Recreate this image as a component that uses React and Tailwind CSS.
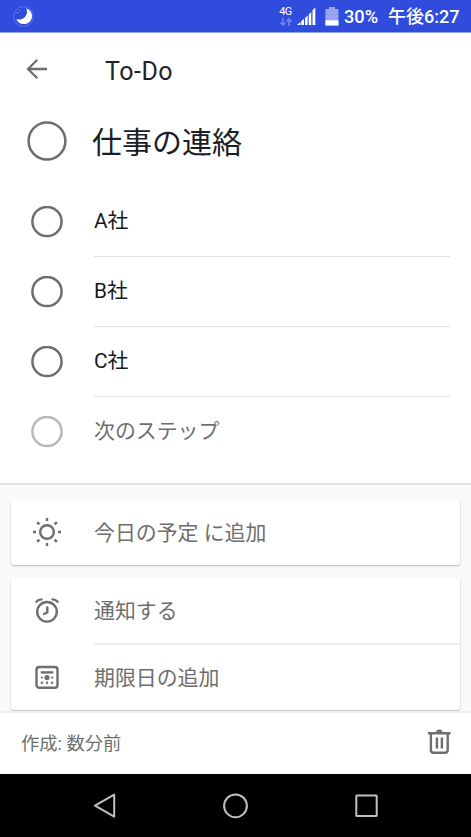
import React from 'react';

const steps = ['A社', 'B社', 'C社'];

function Moon() {
  return (
    <svg className="ml-[13px] h-[21px] w-[21px]" viewBox="0 0 21 21">
      <circle cx="10.5" cy="10.5" r="9.9" fill="none" stroke="#6373e5" strokeWidth="1" />
      <path d="M13.2 2.4C17.1 3.4 19.3 6.8 19 10.5C18.6 15.3 14.9 18.3 10.5 18.1C7.2 17.9 4.4 16.1 3.2 13C6.2 14.2 9.4 13.4 11.7 11.2C14.2 8.8 14.8 5.2 13.2 2.4Z" fill="#fff" />
      <circle cx="4.8" cy="6.6" r=".7" fill="#b6c0f7" />
      <circle cx="7" cy="4.2" r=".5" fill="#a4b0f5" />
    </svg>
  );
}

function StatusBar() {
  return (
    <div className="flex h-[32px] shrink-0 items-center bg-[#304cdd] text-white">
      <Moon />
      <div className="ml-auto flex h-full items-center">
        <div className="flex h-full w-[15px] flex-col items-center pt-[6px]">
          <span className="font-['Roboto','Noto_Sans_CJK_JP',sans-serif] text-[11px] leading-[11px] tracking-[-0.5px]">4G</span>
          <svg className="mt-[1px] h-[8px] w-[12px]" viewBox="0 0 12 8" fill="none" stroke="#7383e9" strokeWidth="1.7">
            <path d="M3 0V7M.6 4.6L3 7L5.4 4.6M9 8V1M6.6 3.4L9 1L11.4 3.4" />
          </svg>
        </div>
        <svg className="ml-[4px] h-[19px] w-[20px]" viewBox="0 0 20 19" fill="#fff">
          <path d="M0 18L3.4 15V18ZM4.2 14.3L7 11.8V18H4.2ZM8 11L10.6 8.5V18H8ZM11.7 7.4L14.3 4.9V18H11.7ZM15.5 3.2L18.3 .5V18H15.5Z" />
        </svg>
        <svg className="ml-[8px] h-[20px] w-[14px]" viewBox="0 0 14 20">
          <path d="M4 1H10V3H13.4V19.5H.4V3H4Z" fill="#98a4ef" />
          <path d="M.4 14.3H13.4V19.5H.4Z" fill="#fff" />
        </svg>
        <span className="ml-[5px] mt-[2px] w-[44px] whitespace-nowrap font-['Roboto',sans-serif] text-[18.2px] font-medium leading-[32px]">30%</span>
        <span className="mt-[1px] w-[83px] whitespace-nowrap font-['Roboto','Noto_Sans_CJK_JP',sans-serif] text-[18px] font-medium leading-[32px]">午後6:27</span>
      </div>
    </div>
  );
}

function Ring({ className }) {
  return (
    <svg className={`h-[32px] w-[32px] shrink-0 ${className}`} viewBox="0 0 32 32" fill="none" stroke="currentColor" strokeWidth="2.5">
      <circle cx="16" cy="15.5" r="14.6" />
    </svg>
  );
}

function Sun() {
  return (
    <svg className="h-[30px] w-[30px]" viewBox="0 0 30 30" fill="none" stroke="#6e6e6e" strokeWidth="2.4">
      <circle cx="15" cy="15" r="6.8" />
      <path d="M15 1V4M15 26V29M1 15H4M26 15H29M5.1 5.1L7.4 7.4M22.6 22.6L24.9 24.9M5.1 24.9L7.4 22.6M22.6 7.4L24.9 5.1" />
    </svg>
  );
}

function Alarm() {
  return (
    <svg className="h-[30px] w-[30px]" viewBox="0 0 30 30" fill="none" stroke="#6e6e6e" strokeWidth="2.4" strokeLinecap="round">
      <circle cx="15" cy="16.8" r="9.8" />
      <path d="M15.3 12.4V17.3L12.2 19M4.4 6.8Q6.4 4.5 9.5 4.4M20.5 4.4Q23.6 4.5 25.6 6.8" />
    </svg>
  );
}

function CalendarIcon() {
  return (
    <svg className="h-[30px] w-[30px]" viewBox="0 0 30 30" fill="#6e6e6e">
      <rect x="4.5" y="5" width="21" height="20.8" rx="2.8" fill="none" stroke="#6e6e6e" strokeWidth="2.4" />
      <rect x="8.7" y="9.2" width="12.6" height="2.4" />
      <circle cx="15" cy="15.6" r="2.6" />
      <circle cx="9.9" cy="15.6" r="1.1" />
      <circle cx="20.1" cy="15.6" r="1.1" />
      <circle cx="9.9" cy="20.8" r="1.2" />
      <circle cx="15" cy="20.8" r="1.2" />
      <circle cx="20.1" cy="20.8" r="1.2" />
    </svg>
  );
}

function ActionRow({ icon, label }) {
  return (
    <div className="flex h-[65px] items-center pl-[21px]">
      <span className="mb-[2px]">{icon}</span>
      <span className="ml-[32px] mt-[1px] whitespace-nowrap text-[20.9px] leading-[30px] text-[#6e6e6e]">{label}</span>
    </div>
  );
}

function NavBar() {
  return (
    <div className="flex h-[63px] shrink-0 items-center bg-black pl-[90px]">
      <svg className="h-[30px] w-[291px]" viewBox="0 0 291 30" fill="none" stroke="#c0c0c0" strokeWidth="2" strokeLinejoin="round">
        <path d="M5 14.7L24.2 3.7V25.7Z" />
        <circle cx="145.5" cy="14.8" r="11.4" />
        <rect x="266.3" y="4.6" width="20.4" height="20.4" rx=".5" />
      </svg>
    </div>
  );
}

export default function App() {
  return (
    <div className="flex h-[837px] w-[471px] flex-col overflow-hidden bg-[#fafafa] font-['Roboto','Noto_Sans_CJK_JP',sans-serif]">
      <StatusBar />
      <main className="h-[453px] shrink-0 border-t border-[#98a4ee] border-b-2 border-b-[#e2e2e2] bg-white">
        <header className="flex h-[73px] items-center pl-[26px]">
          <svg className="mb-[2px] h-[22px] w-[22px]" viewBox="0 0 22 22" fill="none" stroke="#6e6e6e" strokeWidth="2.3">
            <path d="M21 11H2M11.3 1.8L2 11L11.3 20.2" />
          </svg>
          <h1 className="ml-[57px] mt-[4px] text-[25px] leading-[30px] tracking-[0.5px] text-[#1f2328]">To-Do</h1>
        </header>
        <div className="flex h-[70px] items-center pl-[27px]">
          <svg className="h-[40px] w-[40px]" viewBox="0 0 40 40" fill="none" stroke="#6e6e6e" strokeWidth="2.5">
            <circle cx="20" cy="20" r="18.4" />
          </svg>
          <h2 className="ml-[25px] mt-[4px] text-[30px] leading-[40px] text-[#1a1f27]">仕事の連絡</h2>
        </div>
        <div className="mt-[11px]">
          {steps.map((step) => (
            <div key={step} className="flex h-[70px] items-center pl-[31px]">
              <Ring className="mb-[1px] text-[#6e6e6e]" />
              <div className="ml-[31px] mr-[21px] flex h-full flex-1 items-center border-b border-[#e2e2e2] text-[20.8px] leading-[30px] text-[#15191f]">
                <span className="mb-[2px]">{step}</span>
              </div>
            </div>
          ))}
          <div className="flex h-[70px] items-center pl-[31px]">
            <Ring className="mb-[1px] text-[#b8b8b8]" />
            <span className="mb-[2px] ml-[31px] text-[20.9px] leading-[30px] text-[#6e6e6e]">次のステップ</span>
          </div>
        </div>
      </main>
      <section className="flex h-[226px] shrink-0 flex-col gap-[13px] px-[11px] pt-[15px]">
        <div className="h-[65px] shrink-0 rounded-[3px] bg-white shadow-[0_1px_2px_rgba(0,0,0,0.28)]">
          <ActionRow icon={<Sun />} label="今日の予定 に追加" />
        </div>
        <div className="h-[132px] shrink-0 rounded-[3px] bg-white shadow-[0_1px_2px_rgba(0,0,0,0.28)]">
          <ActionRow icon={<Alarm />} label="通知する" />
          <div className="ml-[83px] h-[2px] bg-[#eeeeee]" />
          <ActionRow icon={<CalendarIcon />} label="期限日の追加" />
        </div>
      </section>
      <footer className="flex h-[63px] shrink-0 items-center justify-between border-t-2 border-[#efefef] bg-white pl-[21px] pr-[19px]">
        <span className="mt-[1px] text-[18.3px] leading-[28px] text-[#6e6e6e]">作成: 数分前</span>
        <svg className="mb-[3px] h-[28px] w-[26px]" viewBox="0 0 26 28" fill="none" stroke="#6e6e6e" strokeWidth="2.4">
          <path d="M2 5.3H24.6M4.9 5.5V22Q4.9 24.8 7.7 24.8H18.9Q21.7 24.8 21.7 22V5.5M10.9 9.5V20.5M15.9 9.5V20.5" />
          <path d="M10 5Q10.2 1.6 13.3 1.6Q16.4 1.6 16.6 5Z" fill="#6e6e6e" stroke="none" />
        </svg>
      </footer>
      <NavBar />
    </div>
  );
}
